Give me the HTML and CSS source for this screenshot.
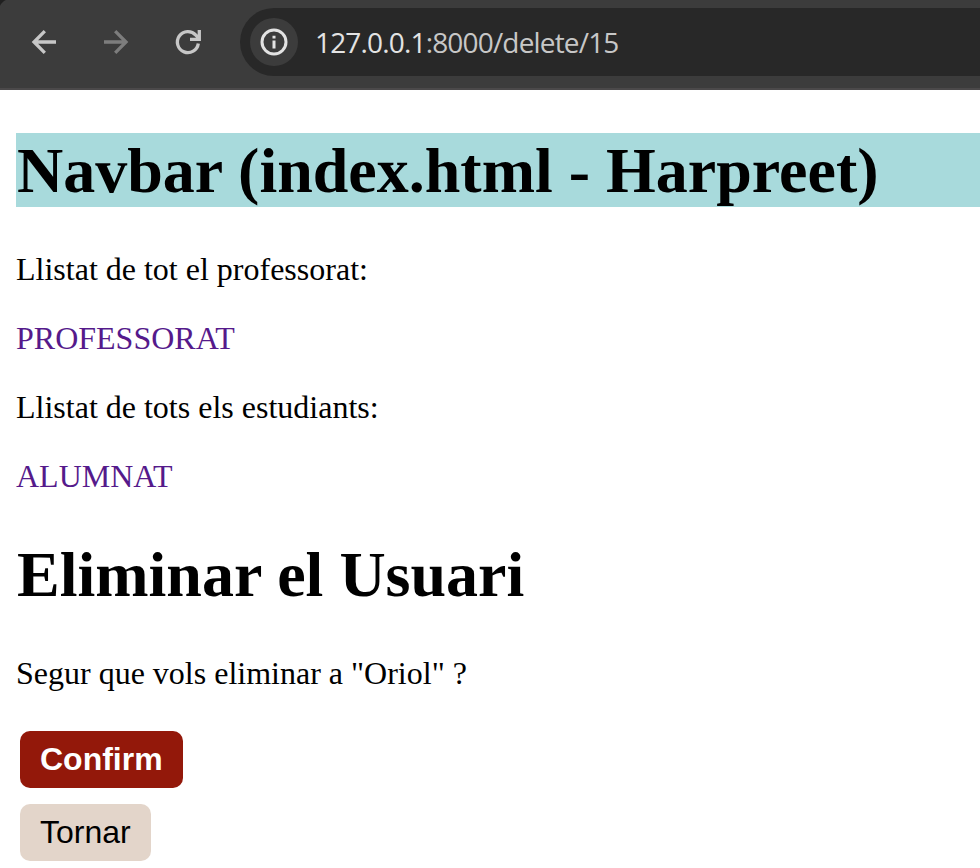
FILE: index.html
```html
<!DOCTYPE html>
<html lang="ca">
<head>
<meta charset="utf-8">
<title>Eliminar el Usuari</title>
<link rel="stylesheet" href="styles.css">
</head>
<body>
<header class="toolbar">
  <svg class="icon back" viewBox="0 0 32 32"><path d="M28 16H6M16.800 5.200L6 16l10.800 10.800"/></svg>
  <svg class="icon forward" viewBox="0 0 32 32"><path d="M4 16h22M15.200 5.200L26 16 15.200 26.800"/></svg>
  <svg class="icon reload" viewBox="0 0 32 32"><path d="M26.300 17.500A10.500 10.500 0 1 1 23.800 9.200L27 12.400M27.300 4v9.300h-9.300"/></svg>
  <div class="address">
    <span class="info"><svg class="info-icon" viewBox="0 0 28 28"><circle cx="14" cy="14" r="12"/><path d="M14 12.500v8M14 7.800v2.800"/></svg></span>
    <span class="url"><span class="host">127.0.0.1</span>:8000/delete/15</span>
  </div>
</header>
<main class="page">
  <h1 class="navbar">Navbar (index.html - Harpreet)</h1>
  <p>Llistat de tot el professorat:</p>
  <p><a class="link" href="#">PROFESSORAT</a></p>
  <p>Llistat de tots els estudiants:</p>
  <p><a class="link" href="#">ALUMNAT</a></p>
  <h1 class="title">Eliminar el Usuari</h1>
  <p>Segur que vols eliminar a "Oriol" ?</p>
  <form class="actions">
    <button class="button confirm" type="button">Confirm</button>
    <button class="button return" type="button">Tornar</button>
  </form>
</main>
</body>
</html>
```
FILE: styles.css
```css
* { box-sizing: border-box; }
body {
  margin: 0;
  height: 868px;
  overflow: hidden;
  background: #fff;
  color: #000;
  font-family: "Liberation Serif", serif;
  font-size: 32px;
}
.toolbar {
  display: flex;
  align-items: center;
  height: 90px;
  padding: 0 0 4px 28px;
  background: radial-gradient(circle at 100% 100%, #3c3c3c 13px, #202020 14px) 0 0 / 12px 12px no-repeat, #3c3c3c;
  border-bottom: 2px solid #4b494a;
}
.icon {
  width: 32px;
  height: 32px;
  margin-right: 40px;
  fill: none;
  stroke: #c7c7c7;
  stroke-width: 3.300;
}
.forward { stroke: #7d7d7d; }
.reload { margin-right: 36px; }
.address {
  display: flex;
  align-items: center;
  flex: 1;
  height: 68px;
  padding-left: 10px;
  background: #282828;
  border-radius: 34px 0 0 34px;
}
.info {
  display: flex;
  align-items: center;
  justify-content: center;
  width: 48px;
  height: 48px;
  margin-right: 17px;
  border-radius: 50%;
  background: #3c3c3c;
}
.info-icon {
  width: 28px;
  height: 28px;
  fill: none;
  stroke: #e3e3e3;
  stroke-width: 3;
}
.url {
  color: #c7c7c7;
  font-family: "Open Sans", sans-serif;
  font-size: 28px;
  letter-spacing: -0.83px;
}
.host { color: #e3e3e3; }
.page { padding: 43px 0 0 16px; }
h1 {
  margin: 0;
  font-size: 64px;
  line-height: 74px;
}
p {
  margin: 32px 0;
  line-height: 37px;
}
.navbar {
  margin-bottom: 44px;
  padding: 2px 0 0 1px;
  line-height: 72px;
  background: #a8dadc;
}
.title {
  margin: 43px 0;
  padding-left: 1px;
}
.link {
  color: #551a8b;
  text-decoration: none;
}
.actions {
  display: flex;
  flex-direction: column;
  align-items: flex-start;
  gap: 16px;
  padding: 7px 0 0 4px;
}
.button {
  height: 57px;
  padding: 0 20px;
  border: 0;
  border-radius: 10px;
  font-family: "Liberation Sans", sans-serif;
  font-size: 32px;
}
.confirm {
  background: #93180a;
  color: #fff;
  font-weight: bold;
}
.return {
  background: #e3d5ca;
  color: #000;
}
```
